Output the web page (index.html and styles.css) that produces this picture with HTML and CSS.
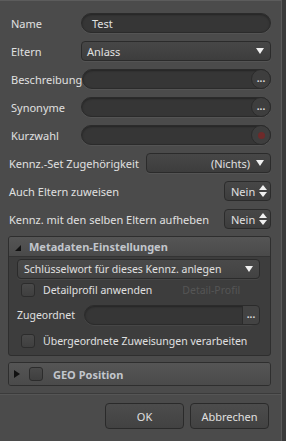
FILE: index.html
```html
<!DOCTYPE html>
<html lang="de">
<head>
    <meta charset="UTF-8">
    <meta name="viewport" content="width=device-width, initial-scale=1.0">
    <title>Kennzeichnung</title>
    <link rel="stylesheet" href="styles.css">
</head>
<body>
    <div class="dialog">
        <div class="form">
            <div class="row">
                <label class="label">Name</label>
                <div class="field pill"><span class="value">Test</span></div>
            </div>
            <div class="row">
                <label class="label">Eltern</label>
                <div class="field select"><span class="value">Anlass</span><span class="arrow"></span></div>
            </div>
            <div class="row">
                <label class="label">Beschreibung</label>
                <div class="field pill"><span class="value"></span><span class="round-btn">...</span></div>
            </div>
            <div class="row">
                <label class="label">Synonyme</label>
                <div class="field pill"><span class="value"></span><span class="round-btn">...</span></div>
            </div>
            <div class="row">
                <label class="label">Kurzwahl</label>
                <div class="field pill"><span class="value"></span><span class="round-btn"><span class="rec-dot"></span></span></div>
            </div>

            <div class="row wide">
                <label class="label">Kennz.-Set Zugehörigkeit</label>
                <div class="field select set-select"><span class="value right">(Nichts)</span><span class="arrow"></span></div>
            </div>
            <div class="row wide">
                <label class="label">Auch Eltern zuweisen</label>
                <div class="field spinner"><span class="value">Nein</span><span class="updown"></span></div>
            </div>
            <div class="row wide">
                <label class="label">Kennz. mit den selben Eltern aufheben</label>
                <div class="field spinner"><span class="value">Nein</span><span class="updown"></span></div>
            </div>
        </div>

        <div class="panel">
            <div class="panel-head"><span class="tri-down"></span>Metadaten-Einstellungen</div>
            <div class="panel-body">
                <div class="field select inner-select"><span class="value">Schlüsselwort für dieses Kennz. anlegen</span><span class="arrow"></span></div>
                <div class="check-row first">
                    <span class="checkbox"></span>
                    <span class="check-text">Detailprofil anwenden</span>
                    <span class="disabled">Detail-Profil</span>
                </div>
                <div class="row assigned">
                    <label class="label">Zugeordnet</label>
                    <div class="field pill"><span class="value"></span><span class="square-btn">...</span></div>
                </div>
                <div class="check-row last">
                    <span class="checkbox"></span>
                    <span class="check-text">Übergeordnete Zuweisungen verarbeiten</span>
                </div>
            </div>
        </div>

        <div class="panel closed">
            <div class="panel-head"><span class="tri-right"></span><span class="checkbox"></span>GEO Position</div>
        </div>

        <div class="footer">
            <button class="btn">OK</button>
            <button class="btn">Abbrechen</button>
        </div>
    </div>
</body>
</html>
```

FILE: styles.css
```css
body {
    margin: 0;
    padding: 0;
    background: #3a3a3a;
    font-family: 'Noto Sans', 'Open Sans', sans-serif;
    font-size: 11px;
    color: #e0e0e0;
}

.dialog {
    width: 282px;
    height: 441px;
    box-sizing: border-box;
    background: #4b4b4b;
    border-top: 1px solid #5c5c5c;
    border-right: 1px solid #5a5a5a;
    padding: 12px 0 0 8px;
}

.form {
    display: flex;
    flex-direction: column;
    gap: 8px;
    padding-right: 10px;
}

.row {
    display: flex;
    align-items: center;
    height: 20px;
}

.label {
    min-width: 70px;
    padding-left: 3px;
    white-space: nowrap;
}

.row .field {
    flex: 1;
}

.row.wide {
    justify-content: space-between;
}

.row.wide .label {
    padding-left: 1px;
}

.row.wide .field {
    flex: none;
}

.field {
    height: 20px;
    box-sizing: border-box;
    display: flex;
    align-items: center;
    border: 1px solid #2b2b2b;
    position: relative;
}

.value {
    flex: 1;
    padding-left: 11px;
    white-space: nowrap;
}

.value.right {
    text-align: right;
    padding-right: 6px;
}

/* round text boxes */
.pill {
    background: #363636;
    border-radius: 10px;
    box-shadow: inset 0 1px 2px rgba(0, 0, 0, 0.35), 0 1px 0 rgba(255, 255, 255, 0.05);
}

.pill .value {
    padding-left: 10px;
}

.round-btn {
    width: 20px;
    height: 20px;
    margin: -1px -1px -1px 0;
    box-sizing: border-box;
    border: 1px solid #2b2b2b;
    border-radius: 50%;
    background: #3e3e3e;
    display: flex;
    align-items: center;
    justify-content: center;
    font-size: 10px;
    font-weight: bold;
    color: #dcdcdc;
    line-height: 1;
    padding-bottom: 2px;
}

.rec-dot {
    width: 7px;
    height: 7px;
    border-radius: 50%;
    background: #6e2a2a;
    margin-top: 2px;
}

/* drop downs */
.select {
    background: linear-gradient(#474747, #3d3d3d);
    border-radius: 4px;
    box-shadow: 0 1px 0 rgba(255, 255, 255, 0.05);
}

.select .value {
    padding-left: 5px;
}

.arrow {
    width: 0;
    height: 0;
    border-left: 4px solid transparent;
    border-right: 4px solid transparent;
    border-top: 6px solid #f0f0f0;
    margin-right: 6px;
}

.set-select {
    width: 125px;
}

.spinner {
    width: 47px;
    background: linear-gradient(#474747, #3d3d3d);
    border-radius: 4px;
}

.spinner .value {
    padding-left: 6px;
}

.updown {
    position: relative;
    width: 8px;
    height: 12px;
    margin-right: 3px;
}

.updown::before,
.updown::after {
    content: "";
    position: absolute;
    left: 0;
    border-left: 4px solid transparent;
    border-right: 4px solid transparent;
}

.updown::before {
    top: 0;
    border-bottom: 5px solid #f0f0f0;
}

.updown::after {
    bottom: 0;
    border-top: 5px solid #f0f0f0;
}

/* collapsible panels */
.panel {
    margin: 7px 10px 0 0;
    border: 1px solid #2e2e2e;
    border-radius: 3px;
    background: #3d3d3d;
    overflow: hidden;
}

.panel-head {
    height: 19px;
    display: flex;
    align-items: center;
    font-weight: bold;
    color: #c2c6cc;
    background: linear-gradient(#555555, #4a4a4a);
    border-bottom: 1px solid #333;
    padding-left: 6px;
}

.tri-down {
    width: 0;
    height: 0;
    border-left: 6px solid transparent;
    border-bottom: 6px solid #111;
    margin: 3px 8px 0 0;
}

.panel-body {
    padding: 2px 10px 4px 8px;
    display: flex;
    flex-direction: column;
    font-size: 10.5px;
}

.inner-select {
    background: linear-gradient(#4a4a4a, #424242);
}

.inner-select .value {
    padding-left: 6px;
}

.check-row {
    display: flex;
    align-items: center;
    height: 20px;
    padding-left: 4px;
}

.check-row.first {
    margin-top: 1px;
}

.check-row.last {
    margin-top: 6px;
}

.checkbox {
    width: 12px;
    height: 12px;
    border: 1px solid #2c2c2c;
    border-radius: 3px;
    background: linear-gradient(#4a4a4a, #3f3f3f);
    margin-right: 8px;
}

.check-text {
    white-space: nowrap;
}

.disabled {
    margin-left: 30px;
    color: #555;
}

.row.assigned {
    margin-top: 5px;
}

.row.assigned .label {
    min-width: 67px;
    padding-left: 0;
}

.square-btn {
    width: 18px;
    height: 20px;
    margin: -1px -1px -1px 0;
    box-sizing: border-box;
    border: 1px solid #2b2b2b;
    border-radius: 0 4px 4px 0;
    background: #434343;
    display: flex;
    align-items: center;
    justify-content: center;
    font-size: 10px;
    font-weight: bold;
    color: #dcdcdc;
    padding-bottom: 3px;
}

.panel.closed {
    margin-top: 6px;
}

.panel.closed .panel-head {
    height: 22px;
    border-bottom: none;
    padding-left: 5px;
}

.tri-right {
    width: 0;
    height: 0;
    border-top: 4px solid transparent;
    border-bottom: 4px solid transparent;
    border-left: 6px solid #111;
    margin-right: 9px;
}

.panel.closed .checkbox {
    margin-right: 10px;
}

.footer {
    margin: 7px 0 0 -8px;
    border-top: 1px solid #3b3b3b;
    box-shadow: inset 0 1px 0 #555;
    display: flex;
    justify-content: flex-end;
    gap: 6px;
    padding: 9px 12px 0 0;
}

.btn {
    width: 79px;
    height: 26px;
    font-family: inherit;
    font-size: 11px;
    color: #e0e0e0;
    background: linear-gradient(#4c4c4c, #424242);
    border: 1px solid #2a2a2a;
    border-radius: 4px;
}
```
